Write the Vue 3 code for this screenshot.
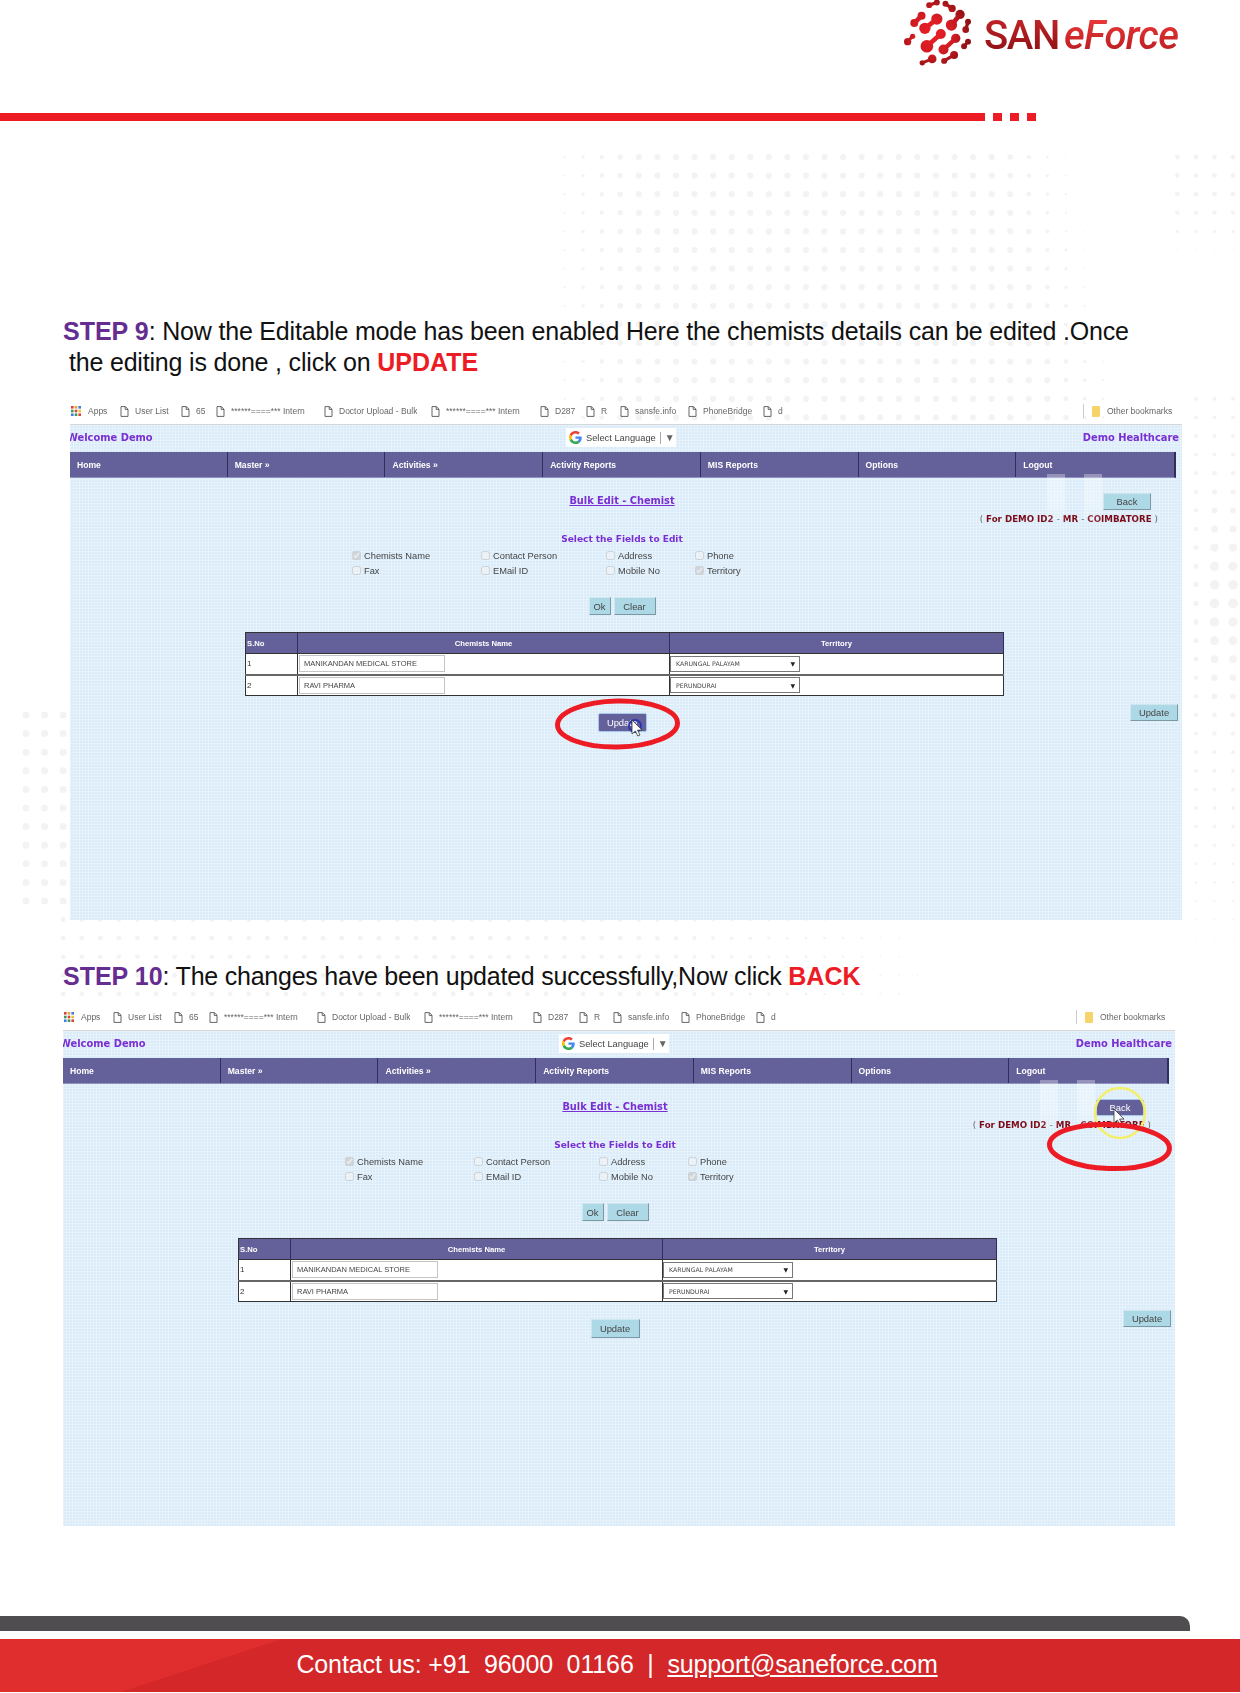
<script setup>
const clamp = (v) => Math.max(0, Math.min(1, v))

function dotRadius(x, y) {
  let r = 0
  if (y < 450) {
    const edge = 1090 + (y - 157) * 0.2
    r = Math.max(r, 3.1 * clamp((x - 525) / 105) * clamp((edge - x) / 90))
    if (y < 270 && x > 1170) r = Math.max(r, 2.4 * clamp((270 - y) / 60))
  }
  if (x > 1185 && y > 385 && y < 1000) {
    const bump = Math.exp(-Math.pow((y - 600) / 90, 2)) * (x > 1205 ? 3 : 0.8)
    r = Math.max(r, (1.9 + bump) * clamp((1000 - y) / 170))
  }
  if (x < 66 && y > 705 && y < 910) r = Math.max(r, 3.5)
  if (y > 915 && y < 1010 && x > 60) {
    r = Math.max(r, 2.4 * clamp((1060 - x) / 420) * clamp((1015 - y) / 30 + 0.35))
  }
  return r
}

const dots = []
for (let j = 0; j < 46; j++) {
  for (let i = 0; i < 66; i++) {
    const cx = 26 + i * 18.57
    const cy = 157 + j * 18.6
    const r = dotRadius(cx, cy)
    if (r > 0.35) dots.push({ id: i + '-' + j, cx, cy, r: +r.toFixed(2) })
  }
}

const blobs = [
  { id: 1, x1: 205, y1: 18, r1: 9, x2: 228, y2: 10, r2: 9, w: 10 },
  { id: 2, x1: 254, y1: 14, r1: 9, x2: 274, y2: 28, r2: 11, w: 10 },
  { id: 3, x1: 160, y1: 72, r1: 12, x2: 182, y2: 50, r2: 12, w: 14 },
  { id: 4, x1: 192, y1: 88, r1: 17, x2: 228, y2: 60, r2: 17, w: 14 },
  { id: 5, x1: 272, y1: 78, r1: 17, x2: 298, y2: 46, r2: 14, w: 14 },
  { id: 6, x1: 315, y1: 92, r1: 10, x2: 322, y2: 68, r2: 9, w: 10 },
  { id: 7, x1: 140, y1: 128, r1: 11, x2: 155, y2: 112, r2: 8, w: 9 },
  { id: 8, x1: 198, y1: 142, r1: 19, x2: 240, y2: 105, r2: 15, w: 14 },
  { id: 9, x1: 248, y1: 152, r1: 15, x2: 285, y2: 118, r2: 14, w: 13 },
  { id: 10, x1: 310, y1: 142, r1: 9, x2: 322, y2: 128, r2: 9, w: 9 },
  { id: 11, x1: 184, y1: 192, r1: 8, x2: 214, y2: 180, r2: 13, w: 9 },
  { id: 12, x1: 250, y1: 186, r1: 9, x2: 280, y2: 168, r2: 12, w: 10 }
]

const bookmarks = [
  { label: 'User List', w: 61 },
  { label: '65', w: 35 },
  { label: '******====*** Intern', w: 108 },
  { label: 'Doctor Upload - Bulk', w: 107 },
  { label: '******====*** Intern', w: 109 },
  { label: 'D287', w: 46 },
  { label: 'R', w: 34 },
  { label: 'sansfe.info', w: 68 },
  { label: 'PhoneBridge', w: 75 },
  { label: 'd', w: 40 }
]

const menu = ['Home', 'Master »', 'Activities »', 'Activity Reports', 'MIS Reports', 'Options', 'Logout']

const fields = [
  { label: 'Chemists Name', on: true },
  { label: 'Contact Person', on: false },
  { label: 'Address', on: false },
  { label: 'Phone', on: false },
  { label: 'Fax', on: false },
  { label: 'EMail ID', on: false },
  { label: 'Mobile No', on: false },
  { label: 'Territory', on: true }
]

const rows = [
  { no: 1, name: 'MANIKANDAN MEDICAL STORE', territory: 'KARUNGAL PALAYAM' },
  { no: 2, name: 'RAVI PHARMA', territory: 'PERUNDURAI' }
]

const shots = [
  { id: 'a', cls: 'shot-a', active: 'update' },
  { id: 'b', cls: 'shot-b', active: 'back' }
]
</script>

<template>
  <div class="page">
    <svg class="dots" width="1240" height="1693" viewBox="0 0 1240 1693" aria-hidden="true">
      <circle v-for="d in dots" :key="d.id" :cx="d.cx" :cy="d.cy" :r="d.r" fill="#f3f3f3" />
    </svg>

    <header class="header">
      <div class="logo">
        <svg class="globe" width="73" height="70" viewBox="120 0 220 210" aria-hidden="true">
          <defs>
            <radialGradient id="ball" gradientUnits="userSpaceOnUse" cx="215" cy="100" r="120">
              <stop offset="0" stop-color="#ee1f26" />
              <stop offset="0.55" stop-color="#d01b22" />
              <stop offset="1" stop-color="#861014" />
            </radialGradient>
          </defs>
          <g v-for="b in blobs" :key="b.id" fill="url(#ball)">
            <line :x1="b.x1" :y1="b.y1" :x2="b.x2" :y2="b.y2" stroke="url(#ball)" :stroke-width="b.w" />
            <circle :cx="b.x1" :cy="b.y1" :r="b.r1" />
            <circle :cx="b.x2" :cy="b.y2" :r="b.r2" />
          </g>
        </svg>
        <div class="wordmark"><span class="wm-san">SAN</span><span class="wm-force">eForce</span></div>
      </div>
      <div class="rule">
        <span class="rule-long"></span>
        <span class="rule-sq"></span>
        <span class="rule-sq"></span>
        <span class="rule-sq"></span>
      </div>
    </header>

    <main class="content">
      <h2 class="step step-a">
        <span class="step-no">STEP 9</span>: Now the Editable mode has been enabled Here the chemists details can be edited .Once<br />
        <span class="step-indent">the editing is done , click on <b class="hot">UPDATE</b></span>
      </h2>

      <template v-for="(s, idx) in shots" :key="s.id">
        <h2 v-if="idx === 1" class="step step-b">
          <span class="step-no">STEP 10</span>: The changes have been updated successfully,Now click <b class="hot">BACK</b>
        </h2>

        <section class="shot" :class="s.cls">
          <div class="bookmarks">
            <div class="apps">
              <svg width="10" height="10" viewBox="0 0 10 10" aria-hidden="true">
                <rect x="0" y="0" width="2.6" height="2.6" fill="#d9443a" />
                <rect x="3.7" y="0" width="2.6" height="2.6" fill="#e8a33a" />
                <rect x="7.4" y="0" width="2.6" height="2.6" fill="#3f7fe0" />
                <rect x="0" y="3.7" width="2.6" height="2.6" fill="#3f9a56" />
                <rect x="3.7" y="3.7" width="2.6" height="2.6" fill="#d9443a" />
                <rect x="7.4" y="3.7" width="2.6" height="2.6" fill="#e8c33a" />
                <rect x="0" y="7.4" width="2.6" height="2.6" fill="#3f7fe0" />
                <rect x="3.7" y="7.4" width="2.6" height="2.6" fill="#3f9a56" />
                <rect x="7.4" y="7.4" width="2.6" height="2.6" fill="#d9443a" />
              </svg>
              <span>Apps</span>
            </div>
            <div v-for="(b, i) in bookmarks" :key="i" class="bm" :style="{ width: b.w + 'px' }">
              <svg width="9" height="11" viewBox="0 0 9 11" aria-hidden="true">
                <path d="M1 .6h4.4L8 3.2v7.2H1zM5.2.8v2.6H8" fill="#fff" stroke="#555" stroke-width=".9" />
              </svg>
              <span class="bm-label">{{ b.label }}</span>
            </div>
            <div class="other">
              <span class="other-sep"></span>
              <span class="folder"></span>
              <span>Other bookmarks</span>
            </div>
          </div>

          <div class="site">
            <div class="top">
              <span class="brand welcome">Welcome Demo</span>
              <div class="lang">
                <svg width="13" height="13" viewBox="0 0 48 48" aria-hidden="true">
                  <path fill="#EA4335" d="M24 9.5c3.5 0 6.7 1.2 9.2 3.6l6.9-6.9C35.900 2.400 30.400 0 24 0 14.600 0 6.500 5.400 2.600 13.200l8 6.200C12.500 13.700 17.800 9.500 24 9.500z" />
                  <path fill="#4285F4" d="M46.900 24.500c0-1.600-.1-3.100-.4-4.500H24v9h12.900c-.6 3-2.200 5.500-4.700 7.200l7.700 6C44.400 37.900 46.900 31.800 46.900 24.500z" />
                  <path fill="#FBBC05" d="M10.500 28.600c-.5-1.500-.8-3-.8-4.600s.3-3.100.8-4.600l-8-6.200C.9 16.500 0 20.100 0 24s.9 7.500 2.600 10.800z" />
                  <path fill="#34A853" d="M24 48c6.500 0 11.900-2.100 15.900-5.800l-7.700-6c-2.200 1.500-4.900 2.300-8.200 2.300-6.200 0-11.500-4.200-13.400-9.900l-8 6.200C6.500 42.600 14.600 48 24 48z" />
                </svg>
                <span>Select Language</span>
                <span class="lang-sep"></span>
                <span class="lang-arrow">▼</span>
              </div>
              <span class="brand healthcare">Demo Healthcare</span>
            </div>

            <nav class="menu">
              <span v-for="m in menu" :key="m" class="menu-item">{{ m }}</span>
            </nav>

            <div class="main">
              <div class="title-row">
                <a class="bulk">Bulk Edit - Chemist</a>
                <span class="btn back" :class="{ 'btn-hover': s.active === 'back' }">Back</span>
              </div>
              <div class="for-row"><i>(</i> For DEMO ID2 <i>-</i> MR <i>-</i> COIMBATORE <i>)</i></div>
              <div class="select-title">Select the Fields to Edit</div>
              <div class="fields">
                <label v-for="f in fields" :key="f.label" class="field">
                  <input type="checkbox" :checked="f.on" disabled />
                  <span>{{ f.label }}</span>
                </label>
              </div>
              <div class="actions">
                <span class="btn ok">Ok</span>
                <span class="btn clear">Clear</span>
              </div>
              <table class="grid">
                <thead>
                  <tr>
                    <th class="c-no">S.No</th>
                    <th class="c-name">Chemists Name</th>
                    <th class="c-terr">Territory</th>
                  </tr>
                </thead>
                <tbody>
                  <tr v-for="r in rows" :key="r.no">
                    <td class="c-no">{{ r.no }}</td>
                    <td class="c-name"><span class="fake-input">{{ r.name }}</span></td>
                    <td class="c-terr">
                      <span class="fake-select"><span>{{ r.territory }}</span><b>▼</b></span>
                    </td>
                  </tr>
                </tbody>
              </table>
              <div class="update-row">
                <span class="btn update" :class="{ 'btn-hover': s.active === 'update' }">Update</span>
                <span class="btn update-side">Update</span>
              </div>
            </div>
          </div>

          <div class="ghost ghost-1"></div>
          <div class="ghost ghost-2"></div>

          <svg class="marks" width="1112" height="519" viewBox="0 0 1112 519" aria-hidden="true">
            <template v-if="s.active === 'update'">
              <circle cx="565" cy="325" r="6" fill="none" stroke="#2a35b5" stroke-width="2" />
              <path d="M562 319v14l3.400-3 2.400 5 2.200-1-2.400-4.900h4.400z" fill="#fff" stroke="#333" stroke-width=".8" />
              <ellipse cx="547.500" cy="323" rx="60" ry="23" fill="none" stroke="#ed1c24" stroke-width="5" transform="rotate(-1 547 323)" />
            </template>
            <template v-else>
              <circle cx="1057" cy="106" r="25" fill="none" stroke="#f3ef6a" stroke-width="2.500" />
              <path d="M1051 102v14l3.400-3 2.400 5 2.200-1-2.400-4.900h4.400z" fill="#fff" stroke="#333" stroke-width=".8" />
              <ellipse cx="1046.500" cy="139.500" rx="60" ry="22" fill="none" stroke="#ed1c24" stroke-width="5" transform="rotate(2 1046 139)" />
            </template>
          </svg>
        </section>
      </template>
    </main>

    <footer class="footer">
      <div class="dark-bar"></div>
      <div class="red-bar">
        <span class="wedge"></span>
        <span class="contact">Contact us: +91&nbsp; 96000&nbsp; 01166&nbsp; |&nbsp; <a class="mail">support@saneforce.com</a></span>
      </div>
    </footer>
  </div>
</template>

<style>
html, body { margin: 0; background: #fff; }
</style>

<style scoped>
.page {
  position: relative;
  width: 1240px;
  height: 1693px;
  overflow: hidden;
  background: #fff;
  font-family: "Liberation Sans", Arial, sans-serif;
}
.dots { position: absolute; left: 0; top: 0; }

.header { position: relative; height: 121px; display: flex; flex-direction: column; }
.logo { height: 113px; display: flex; align-items: flex-start; padding-left: 901px; }
.globe { display: block; flex: none; margin-top: -1px; }
.wordmark {
  flex: none;
  margin-left: 10px;
  margin-top: 16px;
  display: flex;
  gap: 5px;
  font: 500 40px/40px Roboto, "Liberation Sans", sans-serif;
  white-space: nowrap;
}
.wm-san {
  letter-spacing: -1.4px;
  background: linear-gradient(#c4252a, #8a0f12);
  -webkit-background-clip: text;
  background-clip: text;
  color: transparent;
}
.wm-force {
  font-style: italic;
  letter-spacing: -0.6px;
  padding-right: 2px;
  background: linear-gradient(#ee3a3a, #b51a1e);
  -webkit-background-clip: text;
  background-clip: text;
  color: transparent;
}
.rule { height: 8px; display: flex; }
.rule-long { width: 985px; background: #ed1c24; }
.rule-sq { width: 9px; margin-left: 8px; background: #ed1c24; }

.content { position: relative; padding-top: 195px; }
.step {
  margin: 0;
  padding-left: 63px;
  font-size: 25px;
  line-height: 31px;
  font-weight: 400;
  color: #111;
  white-space: nowrap;
}
.step-a { height: 62px; letter-spacing: -0.19px; }
.step-b { height: 31px; margin-top: 41px; letter-spacing: -0.23px; }
.step-no { color: #662d91; font-weight: 700; letter-spacing: 0; }
.step-indent { padding-left: 6px; }
.hot { color: #ed1c24; font-weight: 700; letter-spacing: 0; }

.shot { position: relative; width: 1112px; height: 519px; font-family: "Liberation Sans", Arial, sans-serif; }
.shot-a { margin: 23px 0 0 70px; }
.shot-b { margin: 15px 0 0 63px; }

.bookmarks {
  height: 23px;
  padding-bottom: 3px;
  box-sizing: border-box;
  display: flex;
  align-items: center;
  font-size: 8.5px;
  color: #666;
  white-space: nowrap;
  filter: blur(.3px);
}
.apps { width: 50px; display: flex; align-items: center; gap: 7px; padding-left: 1px; box-sizing: border-box; }
.bm { display: flex; align-items: center; gap: 6px; flex: none; overflow: hidden; }
.bm-label { overflow: hidden; }
.other { margin-left: auto; display: flex; align-items: center; width: 99px; flex: none; }
.other-sep { width: 1px; height: 14px; background: #ccc; margin-right: 8px; }
.folder { width: 8px; height: 11px; margin-right: 7px; background: #f6d469; border-radius: 1px; }

.site {
  height: 496px;
  overflow: hidden;
  border-top: 1px solid #d5d8da;
  box-sizing: border-box;
  background-color: #daecf9;
  background-image:
    linear-gradient(rgba(255,255,255,.28) 1px, transparent 1px),
    linear-gradient(90deg, rgba(255,255,255,.28) 1px, transparent 1px);
  background-size: 3px 3px;
  filter: blur(.35px);
}

.top {
  height: 27px;
  display: grid;
  grid-template-columns: 1fr 110px 1fr;
  column-gap: 0;
  align-items: center;
  padding: 0 3px 2px 0;
  box-sizing: border-box;
  margin-left: -3px;
}
.brand { font: 700 9.9px "DejaVu Sans", Verdana, sans-serif; color: #7a2fd3; white-space: nowrap; }
.healthcare { justify-self: end; }
.lang {
  margin-left: -2px;
  width: 110px;
  height: 19px;
  box-sizing: border-box;
  display: flex;
  align-items: center;
  background: #fff;
  font-size: 9.3px;
  color: #444;
  padding-left: 3px;
  gap: 4px;
  white-space: nowrap;
}
.lang-sep { width: 1px; height: 12px; background: #aaa; }
.lang-arrow { font-size: 10px; color: #666; }

.menu {
  height: 26px;
  width: 1106px;
  display: grid;
  grid-template-columns: repeat(7, 1fr);
  background: #64609a;
  border-right: 2px solid #2f2f5c;
  border-bottom: 1px solid #8f93bd;
  box-sizing: border-box;
}
.menu-item {
  display: flex;
  align-items: center;
  padding-left: 7px;
  border-right: 1px solid #2f2f5c;
  color: #fff;
  font-size: 8.6px;
  font-weight: 700;
}
.menu-item:last-child { border-right: 0; }

.main { width: 1104px; padding-top: 15px; }
.title-row { height: 17px; display: grid; grid-template-columns: 1fr auto 1fr; align-items: center; }
.bulk {
  grid-column: 2;
  margin-top: -2px;
  font: 700 9.8px "DejaVu Sans", Verdana, sans-serif;
  color: #7a2fd3;
  text-decoration: underline;
}
.back { grid-column: 3; justify-self: end; margin-right: 23px; width: 48px; height: 17px; }
.for-row {
  margin-top: 2px;
  height: 14px;
  text-align: right;
  padding-right: 16px;
  font: 700 8.7px/14px "DejaVu Sans", Verdana, sans-serif;
  color: #7c0a17;
}
.for-row i { font-style: normal; font-weight: 400; color: #666; }
.select-title {
  margin-top: 6px;
  height: 14px;
  text-align: center;
  font: 700 9px/14px "DejaVu Sans", Verdana, sans-serif;
  color: #7a2fd3;
}
.fields {
  margin: 2px 0 0 282px;
  display: grid;
  grid-template-columns: 129px 125px 89px 100px;
  grid-auto-rows: 15px;
  font-size: 9.3px;
  color: #444;
}
.field { display: flex; align-items: center; gap: 3px; white-space: nowrap; }
.field input { width: 9px; height: 9px; margin: 0; opacity: .8; flex: none; }

.actions { margin-top: 19px; height: 18px; display: flex; justify-content: center; gap: 3px; }
.btn {
  display: inline-flex;
  align-items: center;
  justify-content: center;
  box-sizing: border-box;
  background: #add8e6;
  border: 1px solid #cfe6ee;
  border-right-color: #7d97a3;
  border-bottom-color: #7d97a3;
  color: #444;
  font-size: 9.4px;
}
.ok { width: 22px; }
.clear { width: 42px; }

.grid {
  margin: 17px 0 0 175px;
  width: 759px;
  border-collapse: collapse;
  table-layout: fixed;
  background: #fff;
  border: 1px solid #333;
  font-size: 8px;
  color: #333;
}
.grid th {
  height: 21px;
  padding: 0;
  background: #64609a;
  color: #fff;
  font-size: 7.7px;
  font-weight: 700;
  border-right: 1px solid #2f2f5c;
  box-sizing: border-box;
}
.grid th.c-no { text-align: left; padding-left: 1px; }
.grid td {
  height: 21px;
  padding: 0 1px;
  border-right: 1px solid #333;
  border-top: 2px solid #666;
  box-sizing: border-box;
}
.grid tbody tr:first-child td { border-top: 1px solid #333; }
.c-no { width: 52px; }
.c-name { width: 372px; }
.fake-input {
  display: block;
  width: 146px;
  height: 17px;
  line-height: 16px;
  box-sizing: border-box;
  padding-left: 4px;
  background: #fff;
  border: 1px solid #c4c4c4;
  font-size: 7.5px;
  color: #444;
  white-space: nowrap;
}
.fake-select {
  display: flex;
  align-items: center;
  justify-content: space-between;
  width: 130px;
  height: 16px;
  box-sizing: border-box;
  padding: 0 4px 0 5px;
  border: 1px solid #777;
  font: 400 6.2px "DejaVu Sans", Verdana, sans-serif;
  color: #444;
  white-space: nowrap;
  margin-left: -1px;
}
.fake-select b { font-size: 6px; color: #222; }

.update-row { display: grid; grid-template-columns: 1fr auto 1fr; align-items: start; margin-top: 8px; }
.update { grid-column: 2; margin-top: 9px; width: 49px; height: 19px; }
.update-side { grid-column: 3; justify-self: end; margin-right: -4px; width: 48px; height: 17px; }
.btn-hover {
  background: #64609a;
  color: #fff;
  border: 1px solid #a9c7ea;
  border-radius: 2px;
}

.ghost {
  position: absolute;
  top: 73px;
  width: 18px;
  height: 50px;
  background: linear-gradient(rgba(255,255,255,.32), rgba(255,255,255,.32) 60%, rgba(255,255,255,.05));
}
.ghost-1 { left: 977px; }
.ghost-2 { left: 1014px; }
.marks { position: absolute; left: 0; top: 0; pointer-events: none; }

.footer { position: absolute; left: 0; right: 0; bottom: 1px; }
.dark-bar {
  width: 1190px;
  height: 15px;
  background: #4f4d4f;
  border-top-right-radius: 10px;
}
.red-bar {
  position: relative;
  height: 53px;
  margin-top: 8px;
  background: #d32729;
  overflow: hidden;
  display: flex;
  align-items: center;
  justify-content: center;
  padding: 0 6px 2px 0;
  box-sizing: border-box;
}
.wedge {
  position: absolute;
  left: 0;
  top: 0;
  bottom: 0;
  width: 282px;
  background: #e02e2e;
  clip-path: polygon(0 0, 100% 0, 43% 100%, 0 100%);
}
.contact {
  position: relative;
  color: #fff;
  font-size: 25px;
  white-space: nowrap;
  letter-spacing: -0.12px;
}
.mail { text-decoration: underline; }
</style>
